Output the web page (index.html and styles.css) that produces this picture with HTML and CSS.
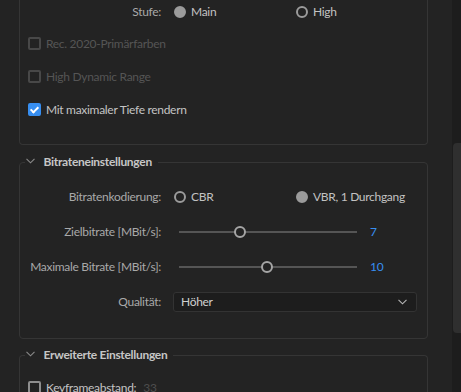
FILE: index.html
```html
<!DOCTYPE html>
<html lang="de">
<head>
    <meta charset="UTF-8">
    <title>Exporteinstellungen</title>
    <link rel="stylesheet" href="styles.css">
</head>
<body>
<div class="panel">
    <div class="content">
        <!-- oberer Block, oben abgeschnitten -->
        <div class="box box-top">
            <div class="row row-short">
                <span class="label">Stufe:</span>
                <div class="radios">
                    <span class="radio"><i class="dot on"></i>Main</span>
                    <span class="radio"><i class="dot"></i>High</span>
                </div>
            </div>
            <div class="check disabled"><i class="cb"></i>Rec. 2020-Primärfarben</div>
            <div class="check disabled"><i class="cb"></i>High Dynamic Range</div>
            <div class="check"><i class="cb on"></i>Mit maximaler Tiefe rendern</div>
        </div>

        <fieldset class="box box-bitrate">
            <legend>
                <svg class="chev" width="9" height="6" viewBox="0 0 9 6"><path d="M0.5 0.8 L4.5 4.8 L8.5 0.8" fill="none" stroke="#8a8a8a" stroke-width="1.1"/></svg>
                Bitrateneinstellungen
            </legend>
            <div class="row">
                <span class="label">Bitratenkodierung:</span>
                <div class="radios">
                    <span class="radio"><i class="dot"></i>CBR</span>
                    <span class="radio"><i class="dot on"></i>VBR, 1 Durchgang</span>
                </div>
            </div>
            <div class="row">
                <span class="label">Zielbitrate [MBit/s]:</span>
                <div class="slider">
                    <div class="track"><i class="thumb" style="left: 34%"></i></div>
                    <span class="value">7</span>
                </div>
            </div>
            <div class="row">
                <span class="label">Maximale Bitrate [MBit/s]:</span>
                <div class="slider">
                    <div class="track"><i class="thumb" style="left: 49.5%"></i></div>
                    <span class="value">10</span>
                </div>
            </div>
            <div class="row">
                <span class="label">Qualität:</span>
                <div class="select">
                    <span>Höher</span>
                    <svg width="9" height="6" viewBox="0 0 9 6"><path d="M0.5 0.8 L4.5 4.8 L8.5 0.8" fill="none" stroke="#b5b5b5" stroke-width="1.1"/></svg>
                </div>
            </div>
        </fieldset>

        <fieldset class="box box-more">
            <legend>
                <svg class="chev" width="9" height="6" viewBox="0 0 9 6"><path d="M0.5 0.8 L4.5 4.8 L8.5 0.8" fill="none" stroke="#8a8a8a" stroke-width="1.1"/></svg>
                Erweiterte Einstellungen
            </legend>
            <div class="check"><i class="cb"></i>Keyframeabstand:<span class="muted">33</span></div>
        </fieldset>
    </div>
    <div class="scrollbar"><div class="sb-thumb"></div></div>
</div>
</body>
</html>
```

FILE: styles.css
```css
* {
    margin: 0;
    padding: 0;
    box-sizing: border-box;
}

body {
    background-color: #232323;
    font: 12px/16px Lato, "Open Sans", sans-serif;
    letter-spacing: -0.3px;
    color: #c4c4c4;
    overflow: hidden;
}

.panel {
    display: flex;
    height: 392px;
}

.content {
    flex: 1;
    padding: 0 24px 0 19px;
}

/*---------------- Boxen ----------------*/
.box {
    border: 1px solid #353535;
    border-radius: 4px;
    min-inline-size: 0;
}

.box-top {
    border-top: none;
    border-radius: 0 0 4px 4px;
    padding-bottom: 18px;
}

.box-bitrate {
    margin-top: 8px;
    padding: 8px 0 19px;
}

.box-more {
    margin-top: 7px;
    padding: 7px 0 0;
    border-bottom: none;
}

legend {
    margin-left: 5px;
    padding: 0 6px 0 0;
    line-height: 18px;
    font-weight: bold;
    color: #c6c6c6;
}

legend .chev {
    margin: 0 6px 0 1px;
    vertical-align: 2px;
}

/*---------------- Zeilen ----------------*/
.row {
    display: grid;
    grid-template-columns: 141px 1fr;
    column-gap: 13px;
    align-items: center;
    height: 35px;
}

.row-short {
    height: 27px;
    padding-bottom: 3px;
}

.label {
    text-align: right;
    color: #a9a9a9;
}

.radios {
    display: flex;
}

.radio {
    display: flex;
    align-items: center;
    width: 122px;
    color: #c2c2c2;
}

.dot {
    width: 12px;
    height: 12px;
    border-radius: 50%;
    border: 2px solid #9b9b9b;
    margin-right: 5px;
}

.dot.on {
    background-color: #9b9b9b;
}

/*---------------- Checkboxen ----------------*/
.check {
    display: flex;
    align-items: center;
    height: 33px;
    padding-left: 8px;
    color: #c4c4c4;
}

.cb {
    width: 13px;
    height: 13px;
    border: 2px solid #8e8e8e;
    border-radius: 2px;
    margin-right: 5px;
    position: relative;
}

.check.disabled {
    color: #555;
}

.check.disabled .cb {
    border-color: #484848;
}

.cb.on {
    background-color: #378ef0;
    border-color: #378ef0;
}

/* Haken */
.cb.on::after {
    content: "";
    position: absolute;
    left: 2px;
    top: 0;
    width: 3px;
    height: 6px;
    border: solid #fff;
    border-width: 0 2px 2px 0;
    transform: rotate(45deg);
}

.muted {
    color: #4e4e4e;
    margin-left: 7px;
}

/*---------------- Slider ----------------*/
.slider {
    display: flex;
    align-items: center;
}

.track {
    position: relative;
    width: 178px;
    height: 2px;
    margin-left: 5px;
    background-color: #555;
}

.thumb {
    position: absolute;
    top: -5px;
    width: 12px;
    height: 12px;
    margin-left: -6px;
    border-radius: 50%;
    border: 2px solid #a5a5a5;
    background-color: #232323;
}

.value {
    margin-left: 13px;
    color: #378ef0;
}

/*---------------- Auswahl ----------------*/
.select {
    display: flex;
    align-items: center;
    justify-content: space-between;
    height: 20px;
    margin: 0 10px 0 -1px;
    padding: 0 9px 0 7px;
    background-color: #1d1d1d;
    border: 1px solid #333;
    border-radius: 3px;
    color: #cfcfcf;
}

/*---------------- Scrollbar ----------------*/
.scrollbar {
    width: 9px;
    background-color: #1d1d1d;
    padding: 143px 0 0 1px;
}

.sb-thumb {
    height: 190px;
    background-color: #2f2f2f;
    border-radius: 4px 0 0 4px;
}
```
